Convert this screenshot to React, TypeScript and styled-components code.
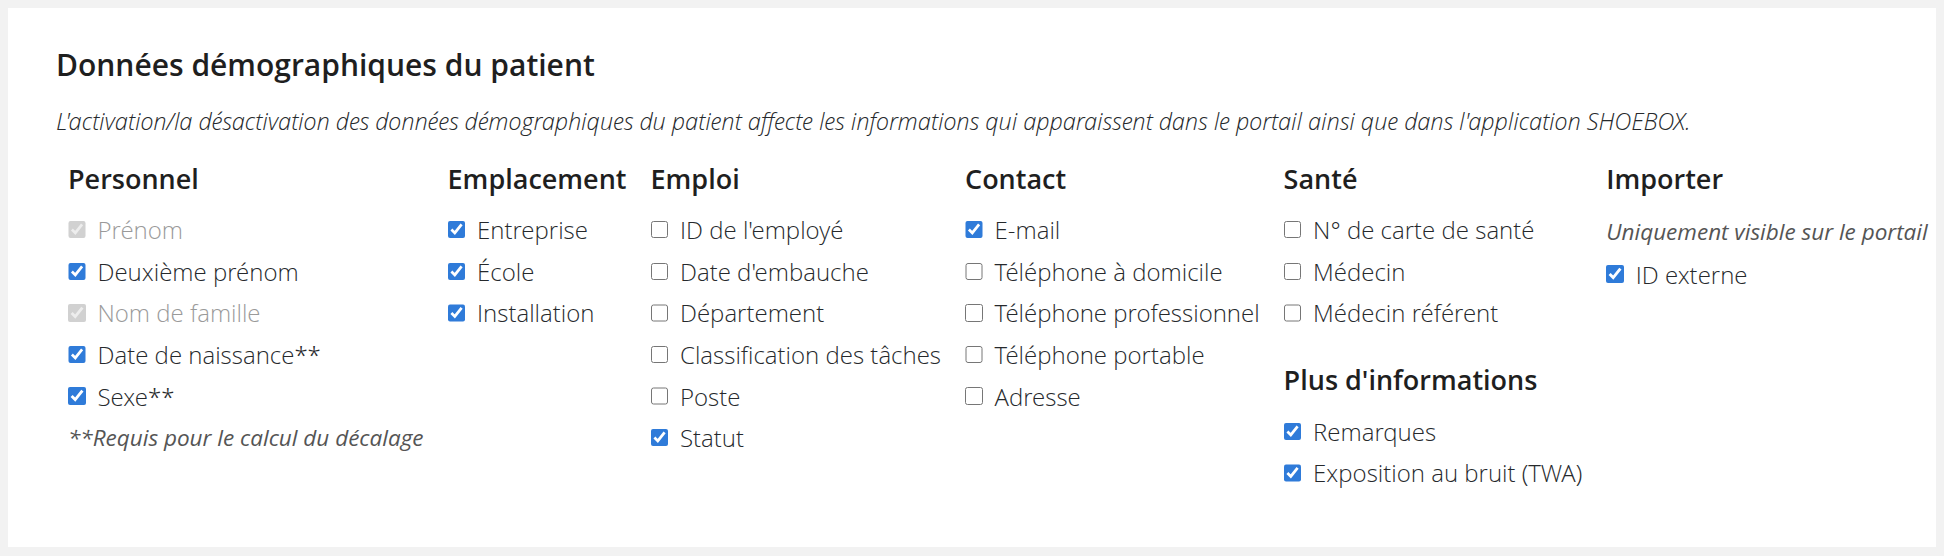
import React from "react";
import styled, { createGlobalStyle } from "styled-components";

const Global = createGlobalStyle`
  html, body { margin: 0; padding: 0; }
  body {
    margin: 8px;
    background: #f2f2f2;
    font-family: "Open Sans", "Noto Sans", sans-serif;
    color: #212529;
  }
`;

const light = `"Open Sans Light", "Open Sans", "Noto Sans", sans-serif`;

const Card = styled.section`
  background: #ffffff;
  box-shadow: 0 3px 10px rgba(0, 0, 0, 0.09);
  padding: 39px 48px 48px;
  height: 539px;
  box-sizing: border-box;
`;

const Title = styled.h2`
  margin: 0;
  font-size: 30px;
  line-height: 1.2;
  font-weight: 600;
  color: #1f1f1f;
`;

const Subtitle = styled.p`
  margin: 21px 0 0;
  font-family: ${light};
  font-size: 23.6px;
  line-height: 34.5px;
  font-weight: 300;
  font-style: italic;
  color: #26292c;
  white-space: nowrap;
`;

const Columns = styled.div`
  display: flex;
  flex-wrap: nowrap;
  margin-top: 24px;
`;

const Column = styled.div`
  display: flex;
  flex-direction: column;
  flex: 0 0 auto;
  padding: 0 12px;
`;

const Heading = styled.h3<{ $spaced?: boolean }>`
  margin: ${(p) => (p.$spaced ? "30.5px" : "0")} 0 14px;
  font-size: 27px;
  line-height: 1.2;
  font-weight: 600;
  color: #1f1f1f;
  white-space: nowrap;
`;

const Row = styled.label<{ $disabled?: boolean }>`
  display: flex;
  align-items: center;
  gap: 12px;
  height: 41.6px;
  font-family: ${light};
  font-size: 24px;
  font-weight: 300;
  white-space: nowrap;
  color: ${(p) => (p.$disabled ? "#9a9a9a" : "#26292c")};
`;

const Box = styled.input.attrs({ type: "checkbox" })`
  width: 17.5px;
  height: 17.5px;
  margin: 0;
  flex: 0 0 auto;
  accent-color: #2f7bd9;
`;

const Note = styled.div<{ $tall?: boolean }>`
  height: ${(p) => (p.$tall ? "44.5px" : "41.6px")};
  display: flex;
  align-items: center;
  font-size: 22.5px;
  font-style: italic;
  font-weight: 400;
  color: #555555;
  white-space: nowrap;
`;

type Item = { label: string; checked: boolean; disabled?: boolean };

const CheckRow = ({ item }: { item: Item }) => (
  <Row $disabled={item.disabled}>
    <Box defaultChecked={item.checked} disabled={item.disabled} />
    {item.label}
  </Row>
);

const personnel: Item[] = [
  { label: "Prénom", checked: true, disabled: true },
  { label: "Deuxième prénom", checked: true },
  { label: "Nom de famille", checked: true, disabled: true },
  { label: "Date de naissance**", checked: true },
  { label: "Sexe**", checked: true },
];

const emplacement: Item[] = [
  { label: "Entreprise", checked: true },
  { label: "École", checked: true },
  { label: "Installation", checked: true },
];

const emploi: Item[] = [
  { label: "ID de l'employé", checked: false },
  { label: "Date d'embauche", checked: false },
  { label: "Département", checked: false },
  { label: "Classification des tâches", checked: false },
  { label: "Poste", checked: false },
  { label: "Statut", checked: true },
];

const contact: Item[] = [
  { label: "E-mail", checked: true },
  { label: "Téléphone à domicile", checked: false },
  { label: "Téléphone professionnel", checked: false },
  { label: "Téléphone portable", checked: false },
  { label: "Adresse", checked: false },
];

const sante: Item[] = [
  { label: "N° de carte de santé", checked: false },
  { label: "Médecin", checked: false },
  { label: "Médecin référent", checked: false },
];

const plus: Item[] = [
  { label: "Remarques", checked: true },
  { label: "Exposition au bruit (TWA)", checked: true },
];

const importer: Item[] = [{ label: "ID externe", checked: true }];

const list = (items: Item[]) => items.map((it) => <CheckRow key={it.label} item={it} />);

export default function App() {
  return (
    <>
      <Global />
      <Card>
        <Title>Données démographiques du patient</Title>
        <Subtitle>
          L'activation/la désactivation des données démographiques du patient affecte les informations qui
          apparaissent dans le portail ainsi que dans l'application SHOEBOX.
        </Subtitle>
        <Columns>
          <Column>
            <Heading>Personnel</Heading>
            {list(personnel)}
            <Note>**Requis pour le calcul du décalage</Note>
          </Column>
          <Column>
            <Heading>Emplacement</Heading>
            {list(emplacement)}
          </Column>
          <Column>
            <Heading>Emploi</Heading>
            {list(emploi)}
          </Column>
          <Column>
            <Heading>Contact</Heading>
            {list(contact)}
          </Column>
          <Column>
            <Heading>Santé</Heading>
            {list(sante)}
            <Heading $spaced>Plus d'informations</Heading>
            {list(plus)}
          </Column>
          <Column>
            <Heading>Importer</Heading>
            <Note $tall>Uniquement visible sur le portail</Note>
            {list(importer)}
          </Column>
        </Columns>
      </Card>
    </>
  );
}
